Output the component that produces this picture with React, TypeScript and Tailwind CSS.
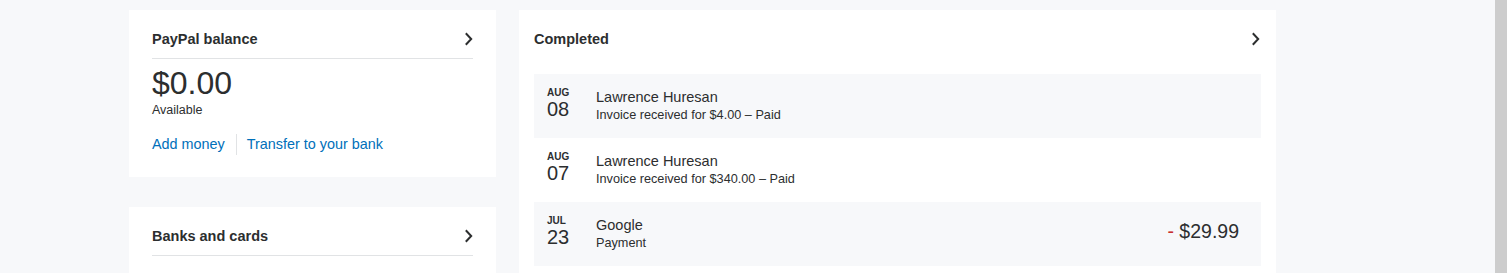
import React from 'react';

const font = { fontFamily: '"Liberation Sans", Arial, sans-serif' };

function Chevron() {
  return (
    <svg width="9" height="14" viewBox="0 0 9 14" fill="none" className="shrink-0">
      <path d="M1.8 1.2 L7.2 7 L1.8 12.8" stroke="#2c2e2f" strokeWidth="2" />
    </svg>
  );
}

function CardHeader({ title, divider = true }: { title: string; divider?: boolean }) {
  return (
    <div
      className={
        'flex items-center justify-between ' +
        (divider ? 'h-[39px] border-b border-[#e1e3e5]' : 'h-[38px]')
      }
    >
      <h2 className="pt-[2px] text-[14.5px] font-bold text-[#2c2e2f]">{title}</h2>
      <Chevron />
    </div>
  );
}

const activity = [
  { month: 'AUG', day: '08', name: 'Lawrence Huresan', note: 'Invoice received for $4.00 – Paid', amount: '' },
  { month: 'AUG', day: '07', name: 'Lawrence Huresan', note: 'Invoice received for $340.00 – Paid', amount: '' },
  { month: 'JUL', day: '23', name: 'Google', note: 'Payment', amount: '$29.99' },
];

export default function App() {
  return (
    <div className="flex h-[273px] overflow-hidden bg-[#f7f8fa] text-[#2c2e2f]" style={font}>
      <div className="flex flex-1 gap-[23px] pl-[129px] pt-[10px]">
        {/* left column */}
        <div className="flex w-[367px] flex-col gap-[30px]">
          <div className="bg-white px-[23px] pt-[10px] pb-[22px]">
            <CardHeader title="PayPal balance" />
            <div className="mt-[8px] text-[32px] leading-[32px]">$0.00</div>
            <div className="mt-[3px] text-[12.5px] leading-[16px]">Available</div>
            <div className="mt-[16px] flex h-[21px] items-center text-[14.4px] leading-[21px] text-[#0070ba]">
              <span className="pr-[11px]">Add money</span>
              <span className="h-[21px] w-px bg-[#e1e3e5]" />
              <span className="pl-[10px]">Transfer to your bank</span>
            </div>
          </div>
          <div className="h-[120px] bg-white px-[23px] pt-[10px]">
            <CardHeader title="Banks and cards" />
          </div>
        </div>

        {/* right column */}
        <div className="h-[300px] w-[757px] bg-white px-[15px] pt-[10px]">
          <div className="pr-[1px]">
            <CardHeader title="Completed" divider={false} />
          </div>
          <div className="mt-[16px] flex flex-col">
            {activity.map((a, i) => (
              <div
                key={i}
                className={
                  'flex h-[64px] pl-[13px] pr-[22px] pt-[13px] ' + (i % 2 === 0 ? 'bg-[#f7f8fa]' : 'bg-white')
                }
              >
                <div className="flex w-[49px] flex-col">
                  <span className="text-[10px] font-bold leading-[12px]">{a.month}</span>
                  <span className="text-[20px] leading-[20px]">{a.day}</span>
                </div>
                <div className="flex flex-1 flex-col">
                  <span className="text-[14.5px] leading-[20px]">{a.name}</span>
                  <span className="text-[12.7px] leading-[16px]">{a.note}</span>
                </div>
                {a.amount && (
                  <div className="pt-[4px] text-[19.5px] leading-[24px]">
                    <span className="text-[#c72e2e]">-</span> {a.amount}
                  </div>
                )}
              </div>
            ))}
          </div>
        </div>
      </div>
      <div className="w-[12px] shrink-0 bg-[#cdcdcd]" />
    </div>
  );
}
